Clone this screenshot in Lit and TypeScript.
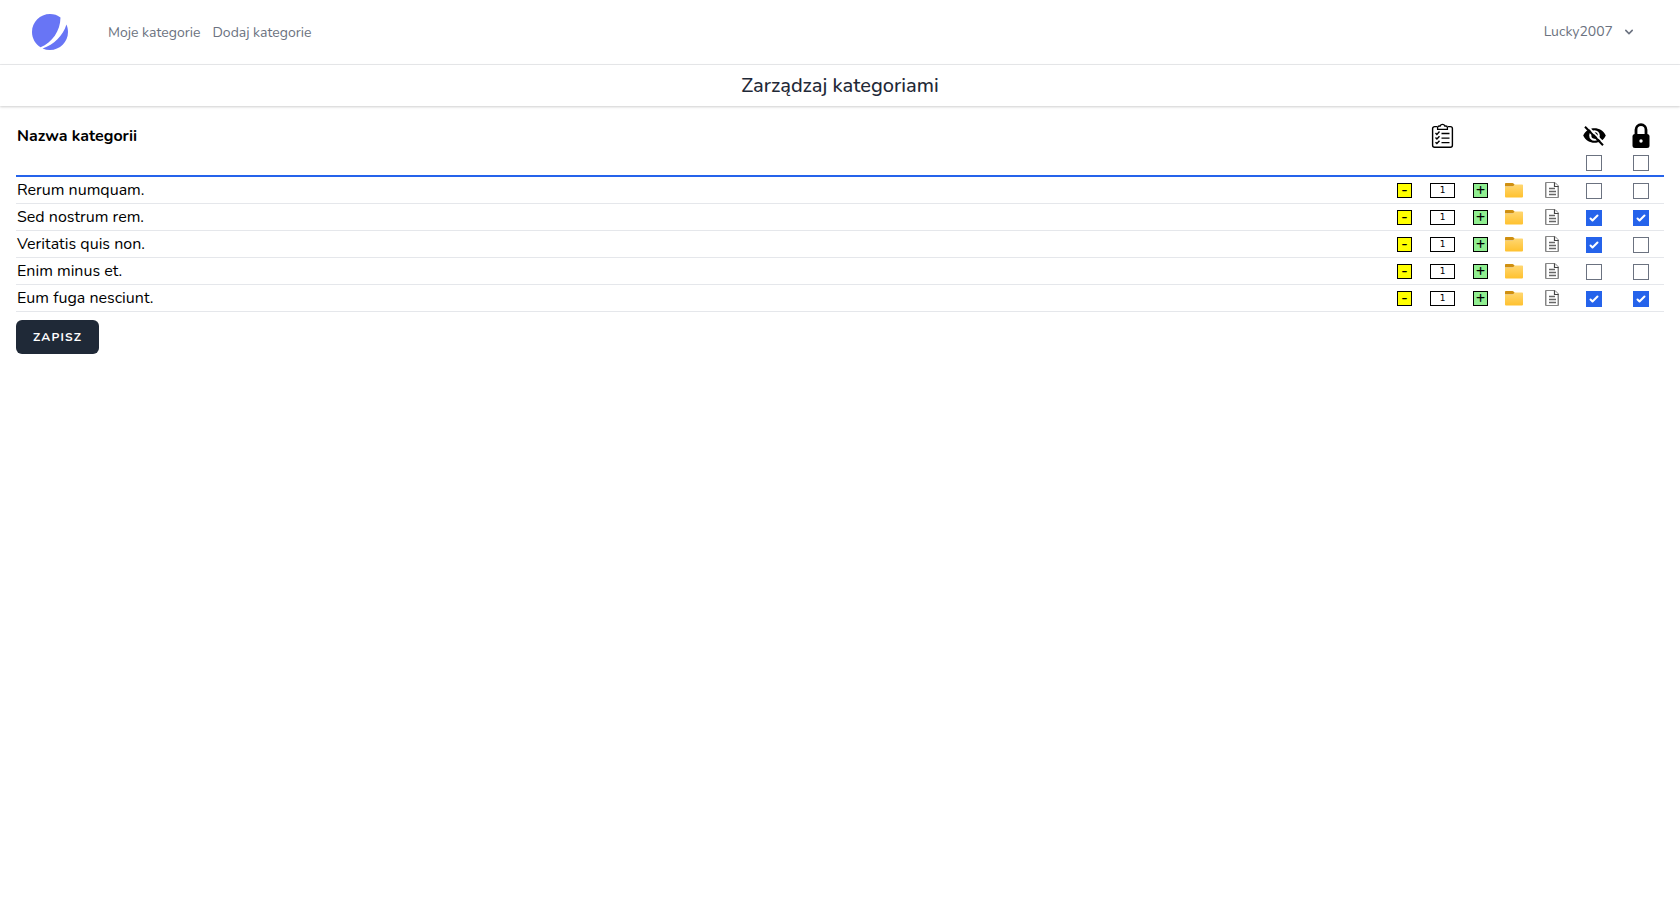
import { LitElement, html, css, svg } from "lit";
import { customElement, state } from "lit/decorators.js";

interface Category {
  name: string;
  count: number;
  hidden: boolean;
  locked: boolean;
}

const logo = svg`<svg class="logo" viewBox="0 0 48 48" aria-hidden="true">
  <path d="M11.395 44.428C4.557 40.198 0 32.632 0 24 0 10.745 10.745 0 24 0a23.891 23.891 0 0113.997 4.502c-.2 17.907-11.097 33.245-26.602 39.926z" fill="#6875f5"/>
  <path d="M14.134 45.885A23.914 23.914 0 0024 48c13.255 0 24-10.745 24-24 0-3.516-.756-6.856-2.115-9.866-4.659 15.143-16.608 27.092-31.75 31.751z" fill="#6875f5"/>
</svg>`;

const chevron = svg`<svg class="chevron" viewBox="0 0 20 20" aria-hidden="true">
  <path fill="currentColor" fill-rule="evenodd" d="M5.293 7.293a1 1 0 011.414 0L10 10.586l3.293-3.293a1 1 0 111.414 1.414l-4 4a1 1 0 01-1.414 0l-4-4a1 1 0 010-1.414z"/>
</svg>`;

const clipboard = svg`<svg class="head-icon" viewBox="0 0 25 25" aria-hidden="true" fill="none" stroke="#000">
  <path d="M7 3.600H4.600a2 2 0 0 0-2 2v16.700a2 2 0 0 0 2 2h15.800a2 2 0 0 0 2-2V5.600a2 2 0 0 0-2-2H18" stroke-width="1.400"/>
  <path d="M7.600 6.400V4.600q0-1.600 1.600-1.600h1a2.400 2.400 0 0 1 4.600 0h1q1.600 0 1.600 1.600v1.800z" stroke-width="1.300"/>
  <path d="M5.500 10l1.400 1.400L9.500 8.600M5.500 14.600L6.900 16l2.600-2.800M5.500 19.200l1.400 1.400 2.600-2.800" stroke-width="1.400"/>
  <path d="M11.500 10.500h8M11.500 15.100h8M11.500 19.700h8" stroke-width="1.300"/>
</svg>`;

const eyeOff = svg`<svg class="head-icon" viewBox="0 0 25 25" aria-hidden="true">
  <path fill="#000" fill-rule="evenodd" d="M1.200 12.500C3.500 7.500 7.800 5.200 12.500 5.200S21.500 7.500 23.800 12.500C21.500 17.500 17.200 19.800 12.500 19.800S3.500 17.500 1.200 12.500zM12.500 7.200a5.300 5.300 0 1 0 0 10.600a5.300 5.300 0 0 0 0-10.600z"/>
  <path fill="#000" d="M12.500 9.300c.6 1.900-.7 3.100-3 2.500a3.200 3.200 0 1 0 3-2.500z"/>
  <path d="M4.700 2.400l18 18.500" stroke="#fff" stroke-width="1.700"/>
  <path d="M3 3.700l18 18.500" stroke="#000" stroke-width="2"/>
</svg>`;

const lock = svg`<svg class="head-icon" viewBox="0 0 25 25" aria-hidden="true">
  <path d="M7 12V6.700a5 5 0 0 1 10 0V12" fill="none" stroke="#000" stroke-width="2.800"/>
  <rect x="3.500" y="11" width="17" height="14" rx="2.500" fill="#000"/>
  <circle cx="12" cy="18" r="1.700" fill="#fff"/>
</svg>`;

const folder = svg`<svg class="row-icon" viewBox="0 0 18 18" aria-hidden="true">
  <defs><linearGradient id="f" x1="0" y1="0" x2="0" y2="1">
    <stop offset="0" stop-color="#ffd772"/><stop offset="1" stop-color="#ffc12e"/>
  </linearGradient></defs>
  <path d="M0 2.800Q0 2 .8 2h6.700q.6 0 1 .5L9.700 3.500 8.500 5.500H0z" fill="#cf8f10"/>
  <path d="M0 5.800h7.600L9.700 3.400h7.500q.8 0 .8.800v11.300q0 1-1 1H1q-1 0-1-1z" fill="url(#f)"/>
</svg>`;

const doc = svg`<svg class="row-icon" viewBox="0 0 18 18" aria-hidden="true" fill="none">
  <path d="M2.500 1.500h9.500l3.500 3.500v11.500h-13z" fill="#fff" stroke="#858585"/>
  <path d="M3.500 2v14M14.500 6v10" stroke="#c4c4c4"/>
  <path d="M11.500 1.500v4h4" stroke="#444" stroke-width="1.200"/>
  <path d="M6 7.500h6M6 10.500h7M6 13.500h7" stroke="#666" stroke-width="1.500"/>
</svg>`;

@customElement("app-root")
export class AppRoot extends LitElement {
  @state() private categories: Category[] = [
    { name: "Rerum numquam.", count: 1, hidden: false, locked: false },
    { name: "Sed nostrum rem.", count: 1, hidden: true, locked: true },
    { name: "Veritatis quis non.", count: 1, hidden: true, locked: false },
    { name: "Enim minus et.", count: 1, hidden: false, locked: false },
    { name: "Eum fuga nesciunt.", count: 1, hidden: true, locked: true },
  ];

  static styles = css`
    :host {
      display: block;
      font-family: Nunito, Lato, "Noto Sans", sans-serif;
      font-size: 16px;
      line-height: 24px;
      color: #000;
      background: #fff;
    }
    * { box-sizing: border-box; }
    svg { display: block; }
    .nav {
      display: flex;
      align-items: center;
      height: 65px;
      padding: 0 32px;
      border-bottom: 1px solid #e9eaec;
      font-size: 14px;
      line-height: 20px;
    }
    .logo { width: 36px; height: 36px; }
    .links { display: flex; gap: 12px; margin-left: 40px; padding-top: 2px; }
    .links a { color: #6b7280; text-decoration: none; }
    .user {
      display: flex;
      align-items: center;
      gap: 8px;
      margin-left: auto;
      padding: 0 11px;
      border: 0;
      background: none;
      color: #6b7280;
      font: inherit;
    }
    .chevron { width: 16px; height: 16px; }
    .title-bar {
      padding: 9px 16px 8px;
      text-align: center;
      box-shadow: 0 1px 3px rgba(0, 0, 0, 0.1), 0 1px 2px rgba(0, 0, 0, 0.1);
    }
    h1 {
      margin: 0;
      font-size: 20px;
      line-height: 24px;
      font-weight: 500;
      color: #1f2937;
    }
    .content { padding: 15px 16px; }
    table {
      width: 100%;
      table-layout: fixed;
      border-collapse: separate;
      border-spacing: 0;
    }
    th, td { padding: 0; vertical-align: middle; text-align: center; }
    .name { padding: 0 1px; text-align: left; font-weight: 400; }
    .name-head { padding: 0 1px; text-align: left; font-weight: 700; }
    .icons > * { height: 30px; }
    .toggles > * { height: 26px; border-bottom: 2px solid #2563eb; }
    tbody tr > * { height: 27px; border-bottom: 1px solid #e5e7eb; }
    .c-btn { width: 27px; }
    .c-count { width: 49px; }
    .c-folder { width: 40px; }
    .c-doc { width: 36px; }
    .c-eye { width: 48px; }
    .c-lock { width: 46px; }
    .head-icon { width: 25px; height: 25px; margin: 0 auto 2px; }
    .row-icon { width: 18px; height: 18px; }
    .step, .count {
      display: block;
      height: 15px;
      margin: 0 auto;
      padding: 0;
      border: 1px solid #000;
      color: #000;
      text-align: center;
    }
    .step { width: 15px; font: 600 16px/13px Nunito, Lato, sans-serif; }
    .minus { background: #ff0; }
    .plus { background: #90ee90; }
    .count { width: 25px; background: #fff; font: 9px/12px "DejaVu Sans", sans-serif; }
    .file { display: block; width: 18px; height: 18px; margin: 0 auto; padding: 0; border: 0; background: none; }
    .check {
      display: block;
      appearance: none;
      width: 16px;
      height: 16px;
      margin: 0 auto;
      border: 1px solid #6b7280;
      background: #fff;
    }
    tbody .check { margin-top: 2px; }
    .check:checked {
      border-color: #2563eb;
      background: #2563eb url("data:image/svg+xml,%3Csvg viewBox='0 0 16 16' fill='white' xmlns='http://www.w3.org/2000/svg'%3E%3Cpath d='M12.207 4.793a1 1 0 010 1.414l-5 5a1 1 0 01-1.414 0l-2-2a1 1 0 011.414-1.414L6.500 9.086l4.293-4.293a1 1 0 011.414 0z'/%3E%3C/svg%3E") center / 16px 16px no-repeat;
    }
    .save {
      display: block;
      margin-top: 8px;
      padding: 9px 16px;
      border: 1px solid transparent;
      border-radius: 6px;
      background: #1f2937;
      color: #fff;
      font: 700 12px/14px Nunito, Lato, sans-serif;
      letter-spacing: 0.1em;
      text-transform: uppercase;
    }
  `;

  private patch(index: number, change: Partial<Category>) {
    this.categories = this.categories.map((c, i) => (i === index ? { ...c, ...change } : c));
  }

  private setAll(change: Partial<Category>) {
    this.categories = this.categories.map((c) => ({ ...c, ...change }));
  }

  private row(c: Category, i: number) {
    return html`<tr>
      <th class="name" scope="row">${c.name}</th>
      <td><button class="step minus" type="button" aria-label="Mniej" @click=${() => this.patch(i, { count: Math.max(0, c.count - 1) })}>-</button></td>
      <td><input class="count" type="text" aria-label="Liczba" .value=${String(c.count)} /></td>
      <td><button class="step plus" type="button" aria-label="Więcej" @click=${() => this.patch(i, { count: c.count + 1 })}>+</button></td>
      <td><button class="file" type="button" aria-label="Folder">${folder}</button></td>
      <td><button class="file" type="button" aria-label="Dokument">${doc}</button></td>
      <td><input class="check" type="checkbox" aria-label="Ukryj" .checked=${c.hidden}
        @change=${(e: Event) => this.patch(i, { hidden: (e.target as HTMLInputElement).checked })} /></td>
      <td><input class="check" type="checkbox" aria-label="Zablokuj" .checked=${c.locked}
        @change=${(e: Event) => this.patch(i, { locked: (e.target as HTMLInputElement).checked })} /></td>
    </tr>`;
  }

  render() {
    return html`
      <nav class="nav">
        <a href="#" aria-label="Start">${logo}</a>
        <div class="links">
          <a href="#">Moje kategorie</a>
          <a href="#">Dodaj kategorie</a>
        </div>
        <button class="user" type="button">Lucky2007 ${chevron}</button>
      </nav>
      <header class="title-bar"><h1>Zarządzaj kategoriami</h1></header>
      <main class="content">
        <table>
          <colgroup>
            <col /><col class="c-btn" /><col class="c-count" /><col class="c-btn" />
            <col class="c-folder" /><col class="c-doc" /><col class="c-eye" /><col class="c-lock" />
          </colgroup>
          <thead>
            <tr class="icons">
              <th class="name-head" scope="col">Nazwa kategorii</th>
              <td></td><th scope="col">${clipboard}</th><td></td><td></td><td></td>
              <th scope="col">${eyeOff}</th><th scope="col">${lock}</th>
            </tr>
            <tr class="toggles">
              <td></td><td></td><td></td><td></td><td></td><td></td>
              <td><input class="check" type="checkbox" aria-label="Ukryj wszystkie"
                @change=${(e: Event) => this.setAll({ hidden: (e.target as HTMLInputElement).checked })} /></td>
              <td><input class="check" type="checkbox" aria-label="Zablokuj wszystkie"
                @change=${(e: Event) => this.setAll({ locked: (e.target as HTMLInputElement).checked })} /></td>
            </tr>
          </thead>
          <tbody>${this.categories.map((c, i) => this.row(c, i))}</tbody>
        </table>
        <button class="save" type="button">Zapisz</button>
      </main>
    `;
  }
}
